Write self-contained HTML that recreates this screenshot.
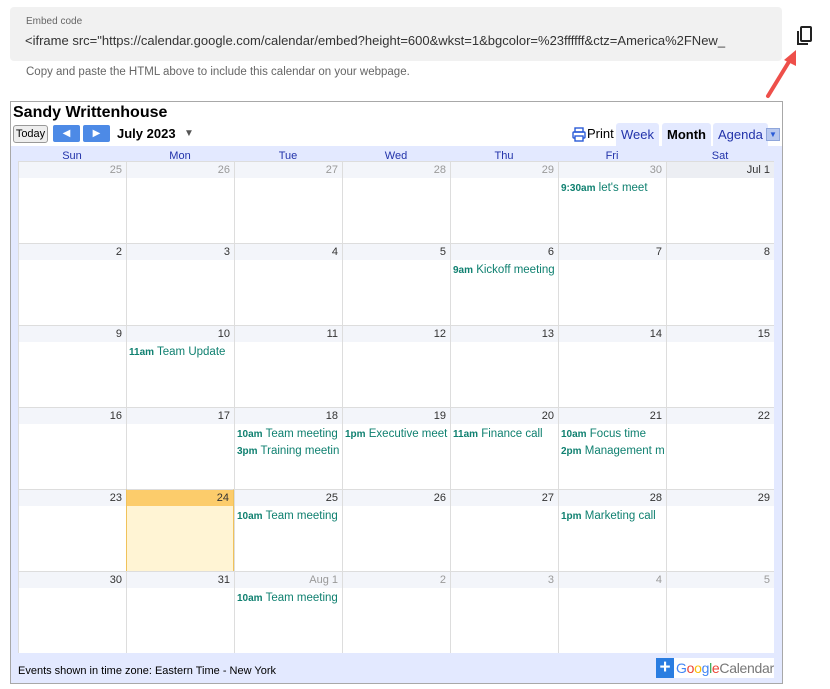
<!DOCTYPE html>
<html><head><style>
*{margin:0;padding:0;box-sizing:border-box}
body{width:830px;height:689px;background:#fff;font-family:"Liberation Sans",Arial,sans-serif;position:relative;overflow:hidden}
.a{position:absolute}
.embed{left:10px;top:7px;width:772px;height:54px;background:#f1f1f1;border-radius:4px}
.cal{left:10px;top:101px;width:773px;height:583px;border:1px solid #a8a8a8;background:#fff}
.cell{position:absolute;width:108px;height:82px;border-left:1px solid #ddd;border-top:1px solid #ddd;background:#fff}
.dn{height:16px;background:#f3f5fa;text-align:right;font-size:11px;color:#333;padding-right:4px;line-height:16px}
.dn.o{color:#999}
.ev{font-size:11.5px;color:#0f8070;white-space:nowrap;overflow:hidden;padding-left:2px;line-height:17px;margin-top:2px;margin-bottom:-2px}
.ev b{font-size:10px}
.hd{position:absolute;top:48px;width:108px;text-align:center;font-size:11px;color:#2233aa}
.tab{position:absolute;top:21px;height:23px;background:#e3e9ff;border-radius:3px 3px 0 0;font-size:13px;line-height:24px;padding:0 5px}
</style></head><body>
<div class="a embed"></div>
<div class="a" style="left:26px;top:16px;font-size:10px;color:#666">Embed code</div>
<div class="a" style="left:25px;top:33px;font-size:13px;color:#333;white-space:nowrap;width:745px;overflow:hidden">&lt;iframe src="https://calendar.google.com/calendar/embed?height=600&amp;wkst=1&amp;bgcolor=%23ffffff&amp;ctz=America%2FNew_</div>
<div class="a" style="left:26px;top:66px;font-size:11.5px;color:#666">Copy and paste the HTML above to include this calendar on your webpage.</div>
<svg class="a" style="left:795px;top:25px" width="20" height="22" viewBox="0 0 20 22"><rect x="6" y="2" width="10" height="14" rx="1" fill="none" stroke="#222" stroke-width="2"/><path d="M3 6v13h10" fill="none" stroke="#222" stroke-width="2"/></svg>
<svg class="a" style="left:762px;top:48px" width="40" height="52" viewBox="0 0 40 52"><path d="M6 48L28 12" stroke="#ee4f4a" stroke-width="4" stroke-linecap="round"/><path d="M34 2L22 12L34 18Z" fill="#ee4f4a"/></svg>
<div class="a cal">
<div class="a" style="left:0;top:44px;width:771px;height:537px;background:#e3e9ff"></div>
<div class="a" style="left:2px;top:2px;font-size:16px;font-weight:bold;color:#000">Sandy Writtenhouse</div>
<div class="a" style="left:2px;top:23px;width:35px;height:18px;border:1px solid #999;border-radius:3px;background:#eee;font-size:11px;line-height:16px;text-align:center">Today</div>
<div class="a" style="left:42px;top:23px;width:27px;height:17px;background:#4d8ae6;border-radius:2px;color:#fff;font-size:10px;text-align:center;line-height:17px">◀</div>
<div class="a" style="left:72px;top:23px;width:27px;height:17px;background:#4d8ae6;border-radius:2px;color:#fff;font-size:10px;text-align:center;line-height:17px">▶</div>
<div class="a" style="left:106px;top:24px;font-size:13px;font-weight:bold">July 2023</div>
<div class="a" style="left:173px;top:26px;font-size:10px;color:#555">▼</div>
<svg class="a" style="left:561px;top:25px" width="14" height="15" viewBox="0 0 14 15"><rect x="3" y="1" width="8" height="4" fill="none" stroke="#2a5bd7" stroke-width="1.4"/><rect x="1" y="5" width="12" height="6" rx="1" fill="none" stroke="#2a5bd7" stroke-width="1.4"/><rect x="3" y="9" width="8" height="5" fill="#fff" stroke="#2a5bd7" stroke-width="1.4"/></svg>
<div class="a" style="left:576px;top:24px;font-size:13px">Print</div>
<div class="tab" style="left:605px;color:#2233aa">Week</div>
<div class="tab" style="left:651px;font-weight:bold;color:#000">Month</div>
<div class="tab" style="left:702px;color:#2233aa">Agenda</div>
<div class="a" style="left:755px;top:26px;width:14px;height:13px;background:#b8c8ee;border:1px solid #8fa6db;color:#2a5bd7;font-size:8px;text-align:center;line-height:12px">▼</div>
<div class="hd" style="left:7px">Sun</div><div class="hd" style="left:115px">Mon</div><div class="hd" style="left:223px">Tue</div><div class="hd" style="left:331px">Wed</div><div class="hd" style="left:439px">Thu</div><div class="hd" style="left:547px">Fri</div><div class="hd" style="left:655px">Sat</div>
<div id="g"></div>
<div class="a" style="left:7px;top:563px;font-size:11px;color:#000">Events shown in time zone: Eastern Time - New York</div>
<div class="a" style="left:645px;top:556px;width:118px;height:20px;background:#fff"></div>
<div class="a" style="left:645px;top:556px;width:18px;height:20px;background:#2a7de1;color:#fff;font-size:19px;font-weight:bold;line-height:19px;text-align:center">+</div>
<div class="a" style="left:665px;top:558px;font-size:14px;color:#777;letter-spacing:-0.3px"><span style="color:#4285f4">G</span><span style="color:#ea4335">o</span><span style="color:#fbbc05">o</span><span style="color:#4285f4">g</span><span style="color:#34a853">l</span><span style="color:#ea4335">e</span>Calendar</div>
</div>
<script>
var d=[["25o","26o","27o","28o","29o","30o","Jul 1"],["2","3","4","5","6","7","8"],["9","10","11","12","13","14","15"],["16","17","18","19","20","21","22"],["23","24","25","26","27","28","29"],["30","31","Aug 1o","2o","3o","4o","5o"]];
var ev={"0,5":[["9:30am","let's meet"]],"1,4":[["9am","Kickoff meeting"]],"2,1":[["11am","Team Update"]],"3,2":[["10am","Team meeting"],["3pm","Training meetin"]],"3,3":[["1pm","Executive meet"]],"3,4":[["11am","Finance call"]],"3,5":[["10am","Focus time"],["2pm","Management m"]],"4,2":[["10am","Team meeting"]],"4,5":[["1pm","Marketing call"]],"5,2":[["10am","Team meeting"]]};
var h="";
for(var r=0;r<6;r++)for(var c=0;c<7;c++){var t=d[r][c],o=t.slice(-1)=="o";if(o)t=t.slice(0,-1);
var today=(r==4&&c==1);
h+='<div class="cell" style="left:'+(7+c*108)+'px;top:'+(59+r*82)+'px;'+(today?'background:#fff4d4;border-left:1px solid #f0c25a;border-right:1px solid #f0c25a;':'')+'"><div class="dn'+(o?' o':'')+'" style="'+(today?'background:#fccc6b;':'')+(r==0&&c==6?'background:#eceef3;':'')+'">'+t+'</div>';
(ev[r+","+c]||[]).forEach(function(e){h+='<div class="ev"><b>'+e[0]+'</b> '+e[1]+'</div>'});
h+='</div>';}
document.getElementById("g").innerHTML=h;
</script>
</body></html>
